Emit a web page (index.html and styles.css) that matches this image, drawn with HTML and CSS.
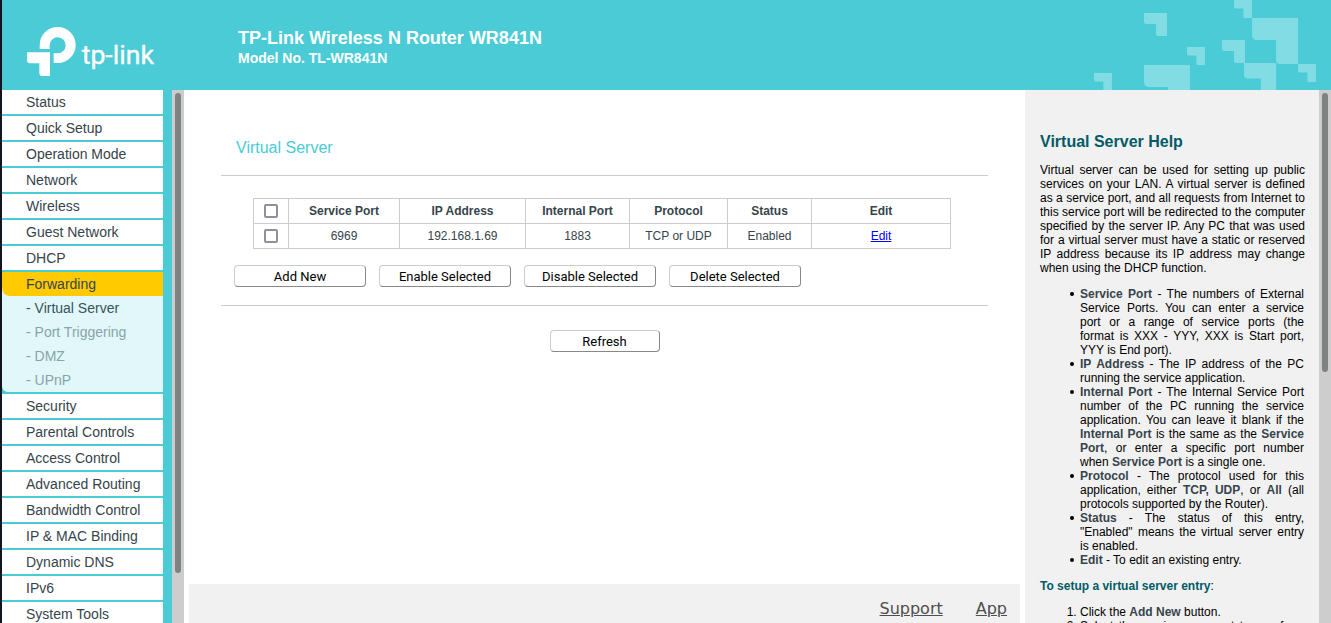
FILE: index.html
```html
<!DOCTYPE html>
<html lang="en">
<head>
<meta charset="utf-8">
<title>TL-WR841N</title>
<link rel="stylesheet" href="styles.css">
</head>
<body>
<header class="top">
  <svg class="logo" viewBox="0 0 390 150" role="img" aria-label="tp-link">
    <path fill="#fff" d="M38 66V54a54 54 0 1 1 54 54H80V79h12a24 24 0 1 0-24-25v12z"/>
    <path fill="#fff" d="M0 76h69v71H47q-10 0-10-10v-28H9q-9 0-9-9z"/>
    <text class="wordmark" x="164" y="110">tp-link</text>
  </svg>
  <div class="product">
    <h1 class="product-name">TP-Link Wireless N Router WR841N</h1>
    <p class="product-model">Model No. TL-WR841N</p>
  </div>
  <svg class="deco" viewBox="0 0 237 90" aria-hidden="true">
    <defs><path id="ell" d="M0 0H46V46H28Q24 46 24 42V22H5Q0 22 0 17Z"/></defs>
    <g fill="#82dce3">
      <use href="#ell" transform="translate(50 13) scale(.5)"/>
      <use href="#ell" transform="translate(0 73) scale(.39)"/>
      <use href="#ell" transform="translate(93 47) scale(.39)"/>
      <use href="#ell" transform="translate(50 65)"/>
      <use href="#ell" transform="translate(140 0) scale(.39)"/>
      <use href="#ell" transform="translate(158 18)"/>
      <use href="#ell" transform="translate(128 40) scale(.5)"/>
      <use href="#ell" transform="translate(150 63) scale(.7)"/>
      <use href="#ell" transform="translate(204 64) scale(.39)"/>
    </g>
  </svg>
</header>
<div class="frame">
  <nav class="side">
    <ul class="menu">
      <li><a class="item" href="#">Status</a></li>
      <li><a class="item" href="#">Quick Setup</a></li>
      <li><a class="item" href="#">Operation Mode</a></li>
      <li><a class="item" href="#">Network</a></li>
      <li><a class="item" href="#">Wireless</a></li>
      <li><a class="item" href="#">Guest Network</a></li>
      <li><a class="item" href="#">DHCP</a></li>
      <li class="open"><a class="item active" href="#">Forwarding</a>
        <ul class="submenu">
          <li><a class="subitem current" href="#">- Virtual Server</a></li>
          <li><a class="subitem" href="#">- Port Triggering</a></li>
          <li><a class="subitem" href="#">- DMZ</a></li>
          <li><a class="subitem" href="#">- UPnP</a></li>
        </ul>
      </li>
      <li><a class="item" href="#">Security</a></li>
      <li><a class="item" href="#">Parental Controls</a></li>
      <li><a class="item" href="#">Access Control</a></li>
      <li><a class="item" href="#">Advanced Routing</a></li>
      <li><a class="item" href="#">Bandwidth Control</a></li>
      <li><a class="item" href="#">IP &amp; MAC Binding</a></li>
      <li><a class="item" href="#">Dynamic DNS</a></li>
      <li><a class="item" href="#">IPv6</a></li>
      <li><a class="item" href="#">System Tools</a></li>
    </ul>
  </nav>
  <div class="track"><div class="thumb thumb-menu"></div></div>
  <main class="main">
    <form class="content">
      <h2 class="title">Virtual Server</h2>
      <div class="section">
        <table class="servers">
          <colgroup><col class="c-check"><col class="c-port"><col class="c-ip"><col class="c-internal"><col class="c-protocol"><col class="c-status"><col class="c-edit"></colgroup>
          <thead>
            <tr><th><input class="check" type="checkbox" aria-label="Select all"></th><th>Service Port</th><th>IP Address</th><th>Internal Port</th><th>Protocol</th><th>Status</th><th>Edit</th></tr>
          </thead>
          <tbody>
            <tr><td><input class="check" type="checkbox" aria-label="Select 6969"></td><td>6969</td><td>192.168.1.69</td><td>1883</td><td>TCP or UDP</td><td>Enabled</td><td><a class="edit" href="#">Edit</a></td></tr>
          </tbody>
        </table>
        <div class="actions">
          <button class="btn" type="button">Add New</button>
          <button class="btn" type="button">Enable Selected</button>
          <button class="btn" type="button">Disable Selected</button>
          <button class="btn" type="button">Delete Selected</button>
        </div>
      </div>
      <div class="refresh"><button class="btn btn-small" type="button">Refresh</button></div>
    </form>
    <footer class="foot"><a class="foot-link" href="#">Support</a><a class="foot-link" href="#">App</a></footer>
  </main>
  <aside class="help">
    <h2 class="help-title">Virtual Server Help</h2>
    <p class="help-intro">Virtual server can be used for setting up public services on your LAN. A virtual server is defined as a service port, and all requests from Internet to this service port will be redirected to the computer specified by the server IP. Any PC that was used for a virtual server must have a static or reserved IP address because its IP address may change when using the DHCP function.</p>
    <ul>
      <li><b>Service Port</b> - The numbers of External Service Ports. You can enter a service port or a range of service ports (the format is XXX - YYY, XXX is Start port, YYY is End port).</li>
      <li><b>IP Address</b> - The IP address of the PC running the service application.</li>
      <li><b>Internal Port</b> - The Internal Service Port number of the PC running the service application. You can leave it blank if the <b>Internal Port</b> is the same as the <b>Service Port</b>, or enter a specific port number when <b>Service Port</b> is a single one.</li>
      <li><b>Protocol</b> - The protocol used for this application, either <b>TCP, UDP</b>, or <b>All</b> (all protocols supported by the Router).</li>
      <li><b>Status</b> - The status of this entry, "Enabled" means the virtual server entry is enabled.</li>
      <li><b>Edit</b> - To edit an existing entry.</li>
    </ul>
    <p><strong class="help-sub">To setup a virtual server entry</strong>:</p>
    <ol>
      <li>Click the <b>Add New</b> button.</li>
      <li>Select the service you want to use from the Common Service Port list.</li>
    </ol>
  </aside>
  <div class="track"><div class="thumb thumb-help"></div></div>
</div>
</body>
</html>
```
FILE: styles.css
```css
* { box-sizing: border-box; }
body {
  margin: 0;
  height: 100vh;
  display: flex;
  flex-direction: column;
  overflow: hidden;
  border-left: 2px solid #11131f;
  background: #fff;
  font: 12px/14px "Liberation Sans", Arial, sans-serif;
  color: #000;
}
ul, ol { margin: 0; padding: 0; }
h1, h2, p { margin: 0; }

.top {
  flex: none;
  height: 90px;
  display: flex;
  align-items: flex-start;
  background: #4acbd6;
  color: #fff;
}
.logo { flex: none; width: 130px; height: 50px; margin: 27px 81px 0 25px; overflow: visible; }
.wordmark { font: 400 80px Roboto, sans-serif; fill: #fff; stroke: #fff; stroke-width: 1px; }
.product { flex: 1; padding-top: 28px; }
.product-name { font-size: 18px; line-height: 20px; }
.product-model { font-size: 14px; line-height: 20px; font-weight: bold; }
.deco { flex: none; width: 237px; height: 90px; overflow: hidden; }

.frame { flex: 1; min-height: 0; display: flex; }

.side { flex: none; width: 170px; padding-right: 9px; overflow: hidden; background: #4acbd6; }
.menu, .submenu { list-style: none; }
.menu > li { margin-bottom: 2px; }
.item, .subitem {
  display: block;
  padding-left: 24px;
  font-size: 14px;
  line-height: 24px;
  text-decoration: none;
  color: #36444b;
}
.item { background: #fff; }
.open { background: #e2f7f9; border-bottom-left-radius: 6px; }
.active { background: #ffcb00; border-bottom-left-radius: 8px; }
.subitem { color: #86a5aa; }
.current { color: #36545b; }

.track { flex: none; width: 12px; padding: 3px; background: #cdcdcd; }
.thumb { border-radius: 3px; background: #7e8281; }
.thumb-menu { height: 91%; }
.thumb-help { height: 53%; }

.main { flex: 1; min-width: 0; display: flex; flex-direction: column; padding: 0 5px; }
.content { flex: 1; padding: 48px 32px 0; }
.title { padding: 0 15px 17px; font-size: 16px; line-height: 20px; font-weight: normal; color: #4acbd6; }
.section { padding: 22px 0 18px; border: solid #ccc; border-width: 1px 0; }
.servers {
  width: 698px;
  margin-left: 32px;
  table-layout: fixed;
  border-collapse: collapse;
  color: #36444b;
}
.servers th, .servers td { height: 25px; padding: 0; border: 1px solid #ccc; text-align: center; }
.c-check { width: 35px; }
.c-port { width: 111px; }
.c-ip { width: 126px; }
.c-internal { width: 104px; }
.c-protocol { width: 98px; }
.c-status { width: 84px; }
.c-edit { width: 139px; }
.check {
  display: block;
  appearance: none;
  width: 14px;
  height: 14px;
  margin: 0 auto;
  border: 2px solid #8f8f9d;
  border-radius: 2px;
  background: #fff;
}
.edit { color: #00f; }
.actions { display: flex; gap: 13px; padding: 16px 0 0 13px; }
.btn {
  width: 132px;
  height: 22px;
  padding: 0;
  border: 1px solid;
  border-color: #ccc #888 #888 #ccc;
  border-radius: 4px;
  background: #fff;
  font: 13px Roboto, sans-serif;
  color: #000;
}
.btn-small { width: 110px; }
.refresh { padding-top: 24px; text-align: center; }
.foot {
  flex: none;
  display: flex;
  justify-content: flex-end;
  gap: 33px;
  padding: 15px 13px 4px;
  background: #f1f1f1;
}
.foot-link { font: 16px/20px "DejaVu Sans", sans-serif; color: #4e4e4e; }

.help { flex: none; width: 294px; padding: 42px 15px 0; overflow: hidden; background: #f1f1f1; text-align: justify; }
.help-title { margin-bottom: 11px; font-size: 16px; line-height: 20px; color: #005b66; }
.help-intro { margin-right: -1px; }
.help ul, .help ol { margin: 12px 0; padding-left: 40px; }
.help ul { list-style: none; }
.help ul li { position: relative; }
.help ul li::before {
  content: "";
  position: absolute;
  top: 5px;
  left: -10px;
  width: 4px;
  height: 4px;
  border-radius: 2px;
  background: #000;
}
.help b { color: #36444b; }
.help-sub { color: #005b66; }
```
